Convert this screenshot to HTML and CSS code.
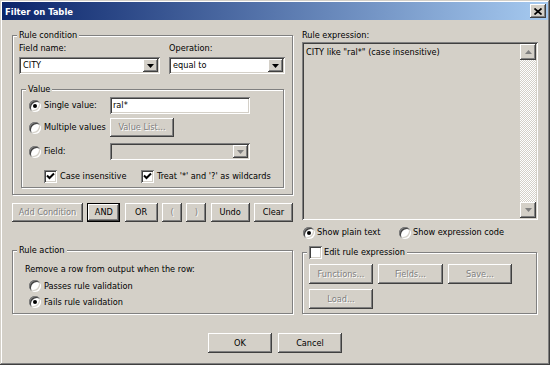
FILE: index.html
```html
<!DOCTYPE html>
<html lang="en">
<head>
  <meta charset="UTF-8">
  <title>Filter on Table</title>
  <link rel="stylesheet" href="styles.css">
</head>
<body>
  <div class="window">
    <div class="titlebar">
      <span class="title">Filter on Table</span>
      <button class="close-btn">
        <svg width="8" height="7" viewBox="0 0 8 7"><path d="M0.5 0.5L7.5 6.5M7.5 0.5L0.5 6.5" stroke="#000" stroke-width="1.7"/></svg>
      </button>
    </div>

    <div class="content">
      <div class="columns">
        <!-- left side: condition, operators, action -->
        <div class="left-col">
          <fieldset class="group cond-group">
            <legend>Rule condition</legend>
            <div class="field-row">
              <div class="field">
                <div class="field-label">Field name:</div>
                <div class="combo combo-name">
                  <span class="combo-text">CITY</span>
                  <span class="drop-btn"><svg width="7" height="4" viewBox="0 0 7 4"><path d="M0 0h7L3.5 4z"/></svg></span>
                </div>
              </div>
              <div class="field">
                <div class="field-label">Operation:</div>
                <div class="combo combo-op">
                  <span class="combo-text">equal to</span>
                  <span class="drop-btn"><svg width="7" height="4" viewBox="0 0 7 4"><path d="M0 0h7L3.5 4z"/></svg></span>
                </div>
              </div>
            </div>

            <fieldset class="group value-group">
              <legend>Value</legend>
              <div class="vrow vrow-single">
                <span class="radio on"></span>
                <span class="vlabel">Single value:</span>
                <div class="textbox">ral*</div>
              </div>
              <div class="vrow vrow-multi">
                <span class="radio"></span>
                <span class="vlabel">Multiple values</span>
                <button class="btn-list" disabled>Value List...</button>
              </div>
              <div class="vrow vrow-field">
                <span class="radio"></span>
                <span class="vlabel">Field:</span>
                <div class="combo combo-dis">
                  <span class="combo-text"></span>
                  <span class="drop-btn"><svg width="7" height="4" viewBox="0 0 7 4"><path d="M0 0h7L3.5 4z" fill="#808080"/></svg></span>
                </div>
              </div>
              <div class="checks">
                <span class="check check-case">
                  <span class="checkbox"><svg width="9" height="9" viewBox="0 0 9 9"><path d="M1 3.5L3.5 6L8 1.5" stroke="#000" stroke-width="2" fill="none"/></svg></span>
                  Case insensitive
                </span>
                <span class="check">
                  <span class="checkbox"><svg width="9" height="9" viewBox="0 0 9 9"><path d="M1 3.5L3.5 6L8 1.5" stroke="#000" stroke-width="2" fill="none"/></svg></span>
                  Treat '*' and '?' as wildcards
                </span>
              </div>
            </fieldset>
          </fieldset>

          <div class="op-row">
            <button class="w-add" disabled>Add Condition</button>
            <button class="w-and default">AND</button>
            <button class="w-and">OR</button>
            <button class="w-paren" disabled>(</button>
            <button class="w-paren" disabled>)</button>
            <button class="w-undo">Undo</button>
            <button class="w-undo">Clear</button>
          </div>

          <fieldset class="group action-group">
            <legend>Rule action</legend>
            <div class="action-text">Remove a row from output when the row:</div>
            <div class="opt-row"><span class="radio"></span>Passes rule validation</div>
            <div class="opt-row"><span class="radio on"></span>Fails rule validation</div>
          </fieldset>
        </div>

        <!-- right side: expression -->
        <div class="right-col">
          <div class="field-label">Rule expression:</div>
          <div class="expr">
            <div class="expr-text">CITY like "ral*" (case insensitive)</div>
            <div class="scrollbar">
              <span class="scroll-btn"><svg width="7" height="4" viewBox="0 0 7 4"><path d="M3.5 0L7 4H0z" fill="#808080"/></svg></span>
              <span class="scroll-track"></span>
              <span class="scroll-btn"><svg width="7" height="4" viewBox="0 0 7 4"><path d="M0 0h7L3.5 4z" fill="#808080"/></svg></span>
            </div>
          </div>

          <div class="show-row">
            <span class="show-opt show-plain"><span class="radio on"></span>Show plain text</span>
            <span class="show-opt"><span class="radio"></span>Show expression code</span>
          </div>

          <fieldset class="group edit-group">
            <legend><span class="checkbox"></span>Edit rule expression</legend>
            <div class="edit-row">
              <button class="w-fn" disabled>Functions...</button>
              <button class="w-fields" disabled>Fields...</button>
              <button class="w-fn" disabled>Save...</button>
            </div>
            <div class="edit-row">
              <button class="w-fn" disabled>Load...</button>
            </div>
          </fieldset>
        </div>
      </div>

      <div class="footer">
        <button class="w-ok">OK</button>
        <button class="w-ok">Cancel</button>
      </div>
    </div>
  </div>
</body>
</html>
```

FILE: styles.css
```css
* {
  box-sizing: border-box;
}
body {
  margin: 0;
  background: #d4d0c8;
  font-family: "DejaVu Sans Condensed", "DejaVu Sans", sans-serif;
  font-size: 9.1px;
  line-height: 13px;
  color: #000;
}
.window {
  width: 550px;
  height: 365px;
  padding: 2px;
  background: #d4d0c8;
  box-shadow: inset -1px -1px #404040, inset 1px 1px #d4d0c8, inset -2px -2px #808080, inset 2px 2px #fff;
}
.titlebar {
  display: flex;
  align-items: center;
  justify-content: space-between;
  height: 18px;
  padding: 0 2px 0 3px;
  background: linear-gradient(to right, #0a246a, #a6caf0);
}
.title {
  color: #fff;
  font-weight: bold;
  font-size: 9.4px;
}

/* classic raised button */
button {
  display: flex;
  align-items: center;
  justify-content: center;
  height: 19px;
  padding: 0;
  border: 0;
  background: #d4d0c8;
  font: inherit;
  color: #000;
  box-shadow: inset -1px -1px #404040, inset 1px 1px #fff, inset -2px -2px #808080, inset 2px 2px #d4d0c8;
}
button:disabled {
  color: #808080;
  text-shadow: 1px 1px #fff;
}
button.default {
  box-shadow: inset 0 0 0 1px #000, inset -2px -2px #404040, inset 2px 2px #fff, inset -3px -3px #808080;
}
.close-btn {
  width: 16px;
  height: 14px;
}

.content {
  padding: 9px 10px 0 10px;
}
.columns {
  display: flex;
  gap: 9px;
}
.left-col {
  width: 281px;
}
.right-col {
  flex: 1;
}

/* etched group box */
.group {
  margin: 0;
  padding: 0 7px 6px 6px;
  border: 1px solid #808080;
  box-shadow: inset 1px 1px #fff, 1px 1px #fff;
}
.group legend {
  margin-left: -2px;
  padding: 0 2px;
  background: #d4d0c8;
  line-height: 13px;
}

.field-row {
  display: flex;
  gap: 9px;
}
.field-label {
  height: 13px;
}
.combo {
  display: flex;
  align-items: center;
  height: 17px;
  margin-top: 2px;
  padding: 2px;
  background: #fff;
  box-shadow: inset 1px 1px #808080, inset -1px -1px #fff, inset 2px 2px #404040, inset -2px -2px #d4d0c8;
}
.combo-name {
  width: 141px;
}
.combo-op {
  width: 116px;
}
.combo-text {
  flex: 1;
  padding-left: 2px;
}
.drop-btn {
  display: flex;
  align-items: center;
  justify-content: center;
  width: 15px;
  height: 13px;
  background: #d4d0c8;
  box-shadow: inset -1px -1px #404040, inset 1px 1px #fff, inset -2px -2px #808080;
}
.combo-dis {
  width: 140px;
  margin-top: 0;
  background: #d4d0c8;
}

.value-group {
  margin: 9px 1px 0 2px;
  padding: 0 7px 4px 7px;
}
.value-group legend {
  margin-left: -3px;
}
.vrow {
  display: flex;
  align-items: center;
}
.vrow-single {
  height: 17px;
  margin-top: 1px;
}
.vrow-multi {
  height: 19px;
  margin-top: 4px;
}
.vrow-field {
  height: 17px;
  margin-top: 6px;
}
.vlabel {
  width: 66px;
}
.textbox {
  width: 140px;
  height: 17px;
  padding: 2px 3px;
  background: #fff;
  box-shadow: inset 1px 1px #808080, inset -1px -1px #fff, inset 2px 2px #404040, inset -2px -2px #d4d0c8;
}
.btn-list {
  width: 64px;
}

.radio {
  position: relative;
  flex: none;
  width: 12px;
  height: 12px;
  margin-right: 3px;
  border-radius: 50%;
  background: #fff;
  box-shadow: inset 1px 1px #808080, inset -1px -1px #fff, inset 2px 2px #404040, inset -2px -2px #d4d0c8;
}
.radio.on::after {
  content: "";
  position: absolute;
  left: 4px;
  top: 4px;
  width: 4px;
  height: 4px;
  border-radius: 50%;
  background: #000;
}

.checks {
  display: flex;
  height: 13px;
  margin: 10px 0 0 15px;
}
.check {
  display: flex;
  align-items: center;
}
.check-case {
  width: 97px;
}
.checkbox {
  display: inline-flex;
  align-items: center;
  justify-content: center;
  flex: none;
  width: 13px;
  height: 13px;
  margin-right: 3px;
  background: #fff;
  box-shadow: inset 1px 1px #808080, inset -1px -1px #fff, inset 2px 2px #404040, inset -2px -2px #d4d0c8;
}

.op-row {
  display: flex;
  justify-content: space-between;
  margin-top: 8px;
}
.w-add { width: 71px; }
.w-and { width: 33px; }
.w-paren { width: 20px; }
.w-undo { width: 39px; }

.action-group {
  margin-top: 22px;
  padding-bottom: 3px;
}
.action-text {
  margin: 6px 0 0 6px;
}
.opt-row {
  display: flex;
  align-items: center;
  height: 16px;
  margin-left: 10px;
}
.action-text + .opt-row {
  margin-top: 2px;
}

.expr {
  display: flex;
  height: 178px;
  padding: 2px;
  background: #d4d0c8;
  box-shadow: inset 1px 1px #808080, inset -1px -1px #fff, inset 2px 2px #404040, inset -2px -2px #d4d0c8;
}
.expr-text {
  flex: 1;
  padding: 2px 2px;
}
.scrollbar {
  display: flex;
  flex-direction: column;
  width: 16px;
}
.scroll-btn {
  display: flex;
  align-items: center;
  justify-content: center;
  height: 16px;
  background: #d4d0c8;
  box-shadow: inset -1px -1px #404040, inset 1px 1px #fff, inset -2px -2px #808080;
}
.scroll-track {
  flex: 1;
  background: repeating-conic-gradient(#d4d0c8 0 25%, #fff 0 50%) 0 0 / 2px 2px;
}

.show-row {
  display: flex;
  align-items: center;
  height: 13px;
  margin-top: 6px;
  padding-left: 1px;
}
.show-opt {
  display: flex;
  align-items: center;
}
.show-opt .radio {
  margin-right: 2px;
}
.show-plain {
  width: 96px;
}

.edit-group {
  margin: 7px 1px 0 0;
  padding-bottom: 4px;
}
.edit-group legend {
  display: flex;
  align-items: center;
}
.edit-group .checkbox {
  margin-right: 2px;
}
.edit-row {
  display: flex;
  gap: 5px;
  margin-top: 5px;
}
.edit-row button {
  height: 20px;
}
.w-fn { width: 64px; }
.w-fields { width: 65px; }

.footer {
  display: flex;
  justify-content: center;
  gap: 6px;
  margin-top: 19px;
}
.w-ok {
  width: 64px;
  height: 20px;
}
```
